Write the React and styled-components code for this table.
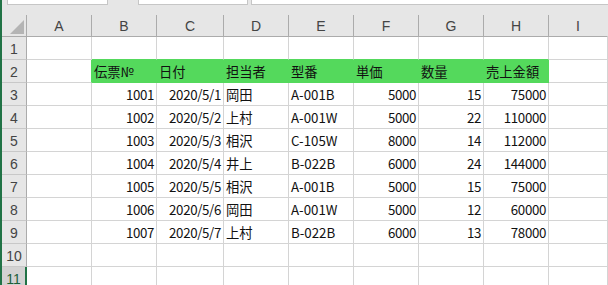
import React from "react";
import styled, { createGlobalStyle } from "styled-components";

const GlobalStyle = createGlobalStyle`
  html, body { margin: 0; padding: 0; background: #ffffff; overflow: hidden; }
`;

const GREEN_FILL = "#54d95c";
const GRID = "#d4d4d4";
const HEAD_LINE = "#ababab";
const ACCENT = "#217346";

const Frame = styled.div`
  width: 608px;
  height: 285px;
  overflow: hidden;
  box-sizing: border-box;
  border-left: 2px solid ${ACCENT};
  background: #e6e6e6;
  display: flex;
  flex-direction: column;
`;

/* bottom edges of the name box and formula bar above the sheet */
const FieldStrip = styled.div`
  height: 5px;
  display: flex;
  flex-shrink: 0;
`;

const Field = styled.div`
  box-sizing: border-box;
  height: 5px;
  background: #ffffff;
  border: 1px solid #c6c6c6;
  border-top: none;
  margin-left: ${p => p.$gap}px;
  width: ${p => (p.$width ? `${p.$width}px` : "auto")};
  flex: ${p => (p.$width ? "none" : "1")};
  ${p => (p.$open ? "border-right: none;" : "")}
`;

const Spacer = styled.div`
  height: 10px;
  flex-shrink: 0;
`;

const Sheet = styled.div`
  display: grid;
  grid-template-columns: 25px 65px 65px 67px 65px 65px 65px 65px 65px 1fr;
  grid-template-rows: 22px repeat(11, 23px);
  background: #ffffff;
`;

const Corner = styled.div`
  box-sizing: border-box;
  background: #e6e6e6;
  border-right: 1px solid ${HEAD_LINE};
  border-bottom: 1px solid ${HEAD_LINE};
  display: flex;
  justify-content: flex-end;
  align-items: flex-end;
  padding: 0 2px 2px 0;
`;

const ColHead = styled.div`
  box-sizing: border-box;
  background: #e6e6e6;
  border-right: 1px solid ${p => (p.$last ? "transparent" : HEAD_LINE)};
  border-bottom: 1px solid ${HEAD_LINE};
  display: flex;
  align-items: center;
  justify-content: center;
  font: 14px "Liberation Sans", Arial, sans-serif;
  color: #444444;
`;

const RowHead = styled.div`
  box-sizing: border-box;
  background: ${p => (p.$active ? "#d2d2d2" : "#e6e6e6")};
  border-right: ${p => (p.$active ? `2px solid ${ACCENT}` : `1px solid ${HEAD_LINE}`)};
  border-bottom: 1px solid #c8c8c8;
  display: flex;
  align-items: center;
  justify-content: center;
  padding-top: 1px;
  font: 14px "Liberation Sans", Arial, sans-serif;
  color: ${p => (p.$active ? "#1d5e38" : "#444444")};
`;

const Cell = styled.div`
  box-sizing: border-box;
  min-width: 0;
  overflow: hidden;
  white-space: nowrap;
  background: ${p => p.$fill || "#ffffff"};
  border-right: 1px solid ${p => p.$right || GRID};
  border-bottom: 1px solid ${p => p.$bottom || GRID};
  display: flex;
  align-items: center;
  justify-content: ${p => (p.$num ? "flex-end" : "flex-start")};
  padding: 1px 2px 0;
  font: 13.3px "Noto Sans CJK JP", "Liberation Sans", sans-serif;
  letter-spacing: ${p => (p.$num ? "-0.35px" : "0")};
  color: #111111;
`;

const columns = ["A", "B", "C", "D", "E", "F", "G", "H", "I"];

const headings = ["伝票№", "日付", "担当者", "型番", "単価", "数量", "売上金額"];

const slips = [
  [1001, "2020/5/1", "岡田", "A-001B", 5000, 15, 75000],
  [1002, "2020/5/2", "上村", "A-001W", 5000, 22, 110000],
  [1003, "2020/5/3", "相沢", "C-105W", 8000, 14, 112000],
  [1004, "2020/5/4", "井上", "B-022B", 6000, 24, 144000],
  [1005, "2020/5/5", "相沢", "A-001B", 5000, 15, 75000],
  [1006, "2020/5/6", "岡田", "A-001W", 5000, 12, 60000],
  [1007, "2020/5/7", "上村", "B-022B", 6000, 13, 78000],
];

// which table columns are right aligned (numbers and dates)
const rightAligned = [true, true, false, false, true, true, true];

function SelectAll() {
  return (
    <svg width="14" height="14" viewBox="0 0 14 14">
      <polygon points="14,0 14,14 0,14" fill="#b4b4b4" />
    </svg>
  );
}

function BlankRow({ n, greenBelow, active }) {
  return (
    <>
      <RowHead $active={active}>{n}</RowHead>
      {columns.map((c, i) => (
        <Cell
          key={c}
          $bottom={greenBelow && i >= 1 && i <= 7 ? GREEN_FILL : undefined}
        />
      ))}
    </>
  );
}

function HeadingRow() {
  return (
    <>
      <RowHead>2</RowHead>
      <Cell $right={GREEN_FILL} />
      {headings.map(h => (
        <Cell key={h} $fill={GREEN_FILL} $right={GREEN_FILL} $bottom={GREEN_FILL}>
          {h}
        </Cell>
      ))}
      <Cell />
    </>
  );
}

function DataRow({ n, values }) {
  return (
    <>
      <RowHead>{n}</RowHead>
      <Cell />
      {values.map((v, i) => (
        <Cell key={i} $num={rightAligned[i]}>
          {v}
        </Cell>
      ))}
      <Cell />
    </>
  );
}

export default function App() {
  return (
    <>
      <GlobalStyle />
      <Frame>
        <FieldStrip>
          <Field $gap={5} $width={101} />
          <Field $gap={30} $width={110} />
          <Field $gap={3} $open />
        </FieldStrip>
        <Spacer />
        <Sheet>
          <Corner>
            <SelectAll />
          </Corner>
          {columns.map((c, i) => (
            <ColHead key={c} $last={i === columns.length - 1}>
              {c}
            </ColHead>
          ))}
          <BlankRow n={1} greenBelow />
          <HeadingRow />
          {slips.map((s, i) => (
            <DataRow key={s[0]} n={i + 3} values={s} />
          ))}
          <BlankRow n={10} />
          <BlankRow n={11} active />
        </Sheet>
      </Frame>
    </>
  );
}
